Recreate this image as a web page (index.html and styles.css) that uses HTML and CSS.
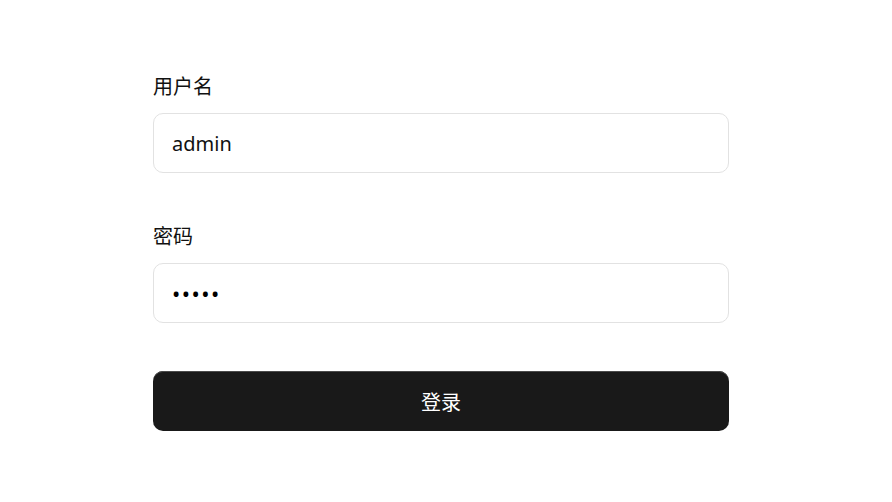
FILE: index.html
```html
<!DOCTYPE html>
<html lang="zh">
<head>
<meta charset="utf-8">
<title>登录</title>
<link rel="stylesheet" href="styles.css">
</head>
<body>
<form class="login">
  <div class="field">
    <label class="label" for="u">用户名</label>
    <input class="input" id="u" type="text" value="admin">
  </div>
  <div class="field field-pw">
    <label class="label" for="p">密码</label>
    <input class="input input-pw" id="p" type="password" value="admin">
  </div>
  <button class="btn" type="button">登录</button>
</form>
</body>
</html>
```
FILE: styles.css
```css
html, body {
  margin: 0;
  padding: 0;
  background: #fff;
}
body {
  font-family: "Noto Sans", "Noto Sans CJK SC", sans-serif;
  color: #111;
}
.login {
  width: 576px;
  margin: 0 0 0 153px;
  padding-top: 72px;
  display: flex;
  flex-direction: column;
}
.field {
  display: flex;
  flex-direction: column;
  gap: 11px;
}
.field-pw {
  margin-top: 49px;
}
.label {
  font-size: 20px;
  line-height: 30px;
  color: #111;
}
.input {
  box-sizing: border-box;
  height: 60px;
  width: 100%;
  border: 1px solid #e2e2e2;
  border-radius: 10px;
  padding: 0 18px;
  font-family: "Noto Sans", "Noto Sans CJK SC", sans-serif;
  font-size: 20px;
  color: #111;
  background: #fff;
  outline: none;
}
.input-pw {
  font-size: 22px;
  letter-spacing: 1.5px;
  color: #000;
}
.btn {
  margin-top: 48px;
  height: 60px;
  width: 100%;
  border: none;
  border-radius: 10px;
  background: #191919;
  box-shadow: inset 0 1px 0 #4a4a4a;
  color: #fff;
  font-family: "Noto Sans CJK SC", sans-serif;
  font-size: 20px;
  cursor: pointer;
}
```
